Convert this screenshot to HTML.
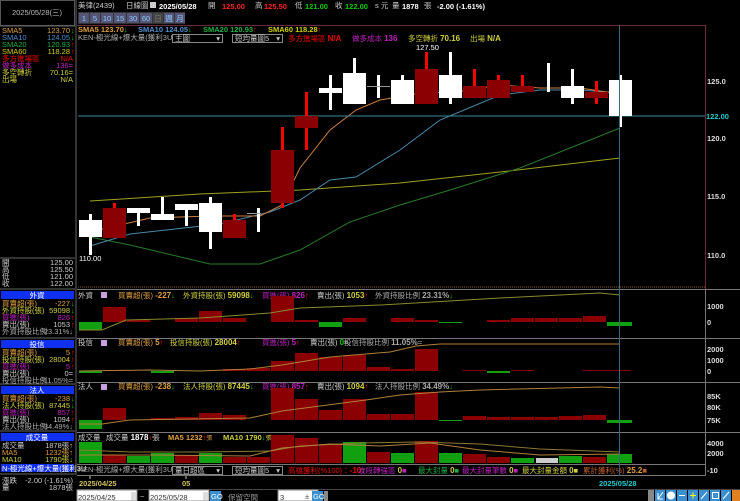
<!DOCTYPE html>
<html><head><meta charset="utf-8"><style>
html,body{margin:0;padding:0;background:#000;width:740px;height:501px;overflow:hidden}
svg{display:block}
text{font-family:"Liberation Sans","Noto Sans CJK TC",sans-serif;font-size:7.5px}
.b{font-weight:bold}
</style></head><body>
<svg width="740" height="501" viewBox="0 0 740 501" xmlns="http://www.w3.org/2000/svg">
<rect width="740" height="501" fill="#000"/>
<rect x="0.5" y="0.5" width="74" height="25" fill="#000" stroke="#555"/>
<text x="37" y="15" fill="#bbb" text-anchor="middle" font-size="7">2025/05/28(三)</text>
<line x1="76" y1="0" x2="76" y2="475" stroke="#666"/>
<line x1="0" y1="26" x2="75" y2="26" stroke="#666"/>
<g font-size="7">
<text x="2" y="33" fill="#e0a040">SMA5</text><text x="70" y="33" fill="#e0a040" text-anchor="end">123.70</text><text x="71" y="33" fill="#0c0">↓</text>
<text x="2" y="40" fill="#5090d0">SMA10</text><text x="70" y="40" fill="#5090d0" text-anchor="end">124.05</text><text x="71" y="40" fill="#0c0">↓</text>
<text x="2" y="47" fill="#20b040">SMA20</text><text x="70" y="47" fill="#20b040" text-anchor="end">120.93</text><text x="71" y="47" fill="#f00">↑</text>
<text x="2" y="54" fill="#d0d000">SMA60</text><text x="70" y="54" fill="#d0d000" text-anchor="end">118.28</text><text x="71" y="54" fill="#f00">↑</text>
<text x="2" y="61" fill="#e00">多方進場區</text><text x="73" y="61" fill="#e00" text-anchor="end">N/A</text>
<text x="2" y="68" fill="#c020c0">做多成本</text><text x="73" y="68" fill="#c020c0" text-anchor="end">136=</text>
<text x="2" y="75" fill="#d0d040">多空轉折</text><text x="73" y="75" fill="#d0d040" text-anchor="end">70.16=</text>
<text x="2" y="82" fill="#d0d040">出場</text><text x="73" y="82" fill="#d0d040" text-anchor="end">N/A</text>
<line x1="0" y1="258" x2="75" y2="258" stroke="#666"/>
<text x="2" y="265" fill="#ccc">開</text><text x="73" y="265" fill="#ccc" text-anchor="end">125.00</text>
<text x="2" y="272" fill="#ccc">高</text><text x="73" y="272" fill="#ccc" text-anchor="end">125.50</text>
<text x="2" y="279" fill="#ccc">低</text><text x="73" y="279" fill="#ccc" text-anchor="end">121.00</text>
<text x="2" y="286" fill="#ccc">收</text><text x="73" y="286" fill="#ccc" text-anchor="end">122.00</text>
<line x1="0" y1="289" x2="75" y2="289" stroke="#666"/>
<rect x="1" y="291" width="73" height="8" fill="#1030f0"/><text x="37" y="298" fill="#fff" text-anchor="middle">外資</text>
<text x="2" y="306" fill="#e0a040">買賣超(張)</text><text x="70" y="306" fill="#e0a040" text-anchor="end">-227</text><text x="71" y="306" fill="#0c0">↓</text>
<text x="2" y="313" fill="#d0d040">外資持股(張)</text><text x="70" y="313" fill="#d0d040" text-anchor="end">59098</text><text x="71" y="313" fill="#0c0">↓</text>
<text x="2" y="320" fill="#c020c0">買進(張)</text><text x="70" y="320" fill="#c020c0" text-anchor="end">826</text><text x="71" y="320" fill="#f00">↑</text>
<text x="2" y="327" fill="#ccc">賣出(張)</text><text x="70" y="327" fill="#ccc" text-anchor="end">1053</text><text x="71" y="327" fill="#f00">↑</text>
<text x="2" y="334" fill="#aaa">外資持股比例</text><text x="73" y="334" fill="#aaa" text-anchor="end">23.31%↓</text>
<line x1="0" y1="338" x2="75" y2="338" stroke="#666"/>
<rect x="1" y="340" width="73" height="8" fill="#1030f0"/><text x="37" y="347" fill="#fff" text-anchor="middle">投信</text>
<text x="2" y="355" fill="#e0a040">買賣超(張)</text><text x="70" y="355" fill="#e0a040" text-anchor="end">5</text><text x="71" y="355" fill="#f00">↑</text>
<text x="2" y="362" fill="#d0d040">投信持股(張)</text><text x="70" y="362" fill="#d0d040" text-anchor="end">28004</text><text x="71" y="362" fill="#f00">↑</text>
<text x="2" y="369" fill="#c020c0">買進(張)</text><text x="70" y="369" fill="#c020c0" text-anchor="end">5</text><text x="71" y="369" fill="#f00">↑</text>
<text x="2" y="376" fill="#ccc">賣出(張)</text><text x="73" y="376" fill="#ccc" text-anchor="end">0=</text>
<text x="2" y="383" fill="#aaa">投信持股比例</text><text x="73" y="383" fill="#aaa" text-anchor="end">11.05%=</text>
<line x1="0" y1="384" x2="75" y2="384" stroke="#666"/>
<rect x="1" y="386" width="73" height="8" fill="#1030f0"/><text x="37" y="393" fill="#fff" text-anchor="middle">法人</text>
<text x="2" y="401" fill="#e0a040">買賣超(張)</text><text x="70" y="401" fill="#e0a040" text-anchor="end">-238</text><text x="71" y="401" fill="#0c0">↓</text>
<text x="2" y="408" fill="#d0d040">法人持股(張)</text><text x="70" y="408" fill="#d0d040" text-anchor="end">87445</text><text x="71" y="408" fill="#0c0">↓</text>
<text x="2" y="415" fill="#c020c0">買進(張)</text><text x="70" y="415" fill="#c020c0" text-anchor="end">857</text><text x="71" y="415" fill="#f00">↑</text>
<text x="2" y="422" fill="#ccc">賣出(張)</text><text x="70" y="422" fill="#ccc" text-anchor="end">1094</text><text x="71" y="422" fill="#f00">↑</text>
<text x="2" y="429" fill="#aaa">法人持股比例</text><text x="73" y="429" fill="#aaa" text-anchor="end">34.49%↓</text>
<line x1="0" y1="431" x2="75" y2="431" stroke="#666"/>
<rect x="1" y="433" width="73" height="8" fill="#1030f0"/><text x="37" y="440" fill="#fff" text-anchor="middle">成交量</text>
<text x="2" y="448" fill="#ccc">成交量</text><text x="73" y="448" fill="#ccc" text-anchor="end">1878張↑</text>
<text x="2" y="455" fill="#e0a040">MA5</text><text x="73" y="455" fill="#e0a040" text-anchor="end">1232張↑</text>
<text x="2" y="462" fill="#d0d040">MA10</text><text x="73" y="462" fill="#d0d040" text-anchor="end">1790張↓</text>
<rect x="1" y="464" width="73" height="8" fill="#1030f0"/><text x="2" y="471" fill="#fff" font-size="6.5">N-極光線+爆大量(獲利3U</text>
<line x1="0" y1="474" x2="75" y2="474" stroke="#666"/>
<text x="2" y="483" fill="#ccc">漲跌</text><text x="73" y="483" fill="#ccc" text-anchor="end">-2.00 (-1.61%)</text>
<text x="2" y="490" fill="#ccc">量</text><text x="73" y="490" fill="#ccc" text-anchor="end">1878張</text>
</g>
<text x="78" y="8" fill="#ccc" font-size="7">美律(2439)</text>
<text x="126" y="8" fill="#ccc" font-size="7">日線圖</text>
<rect x="150" y="2" width="6" height="6" fill="#ccc"/>
<text x="159" y="9" fill="#fff" class="b" font-size="9">2025/05/28</text>
<text x="208" y="8" fill="#ccc" font-size="7">開</text><text x="222" y="9" fill="#f22" class="b" font-size="9">125.00</text>
<text x="255" y="8" fill="#ccc" font-size="7">高</text><text x="264" y="9" fill="#f22" class="b" font-size="9">125.50</text>
<text x="295" y="8" fill="#ccc" font-size="7">低</text><text x="305" y="9" fill="#0c0" class="b" font-size="9">121.00</text>
<text x="335" y="8" fill="#ccc" font-size="7">收</text><text x="345" y="9" fill="#0c0" class="b" font-size="9">122.00</text>
<text x="375" y="8" fill="#ccc" font-size="7">s 元</text>
<text x="392" y="8" fill="#ccc" font-size="7">量</text><text x="402" y="9" fill="#fff" class="b" font-size="9">1878</text>
<text x="424" y="8" fill="#ccc" font-size="7">張</text>
<text x="437" y="9" fill="#fff" class="b" font-size="9">-2.00 (-1.61%)</text>
<g font-size="8" text-anchor="middle">
<rect x="78" y="12" width="107" height="12" fill="#333"/>
<rect x="79" y="13" width="10" height="10" fill="#557"/><text x="84" y="21" fill="#8cf">1</text>
<rect x="90" y="13" width="10" height="10" fill="#557"/><text x="95" y="21" fill="#8cf">5</text>
<rect x="101" y="13" width="12" height="10" fill="#557"/><text x="107" y="21" fill="#8cf">10</text>
<rect x="114" y="13" width="12" height="10" fill="#557"/><text x="120" y="21" fill="#8cf">15</text>
<rect x="127" y="13" width="12" height="10" fill="#557"/><text x="133" y="21" fill="#8cf">30</text>
<rect x="140" y="13" width="12" height="10" fill="#557"/><text x="146" y="21" fill="#8cf">60</text>
<rect x="153" y="13" width="10" height="10" fill="#444"/><text x="158" y="21" fill="#777" font-size="6">日</text>
<rect x="164" y="13" width="10" height="10" fill="#557"/><text x="169" y="21" fill="#8cf" font-size="6">週</text>
<rect x="175" y="13" width="10" height="10" fill="#557"/><text x="180" y="21" fill="#8cf" font-size="6">月</text>
</g>
<line x1="77" y1="25.5" x2="705" y2="25.5" stroke="#6a2a3a"/>
<line x1="705.5" y1="25" x2="705.5" y2="289" stroke="#6a2a3a"/>
<text x="78" y="32" fill="#e0a040" class="b" font-size="8">SMA5 123.70<tspan fill="#0c0">↓</tspan></text>
<text x="138" y="32" fill="#5090d0" class="b" font-size="8">SMA10 124.05<tspan fill="#0c0">↓</tspan></text>
<text x="203" y="32" fill="#20b040" class="b" font-size="8">SMA20 120.93<tspan fill="#f00">↑</tspan></text>
<text x="268" y="32" fill="#d0d000" class="b" font-size="8">SMA60 118.28<tspan fill="#f00">↑</tspan></text>
<text x="78" y="40" fill="#aaa" font-size="6">KEN-極光線+爆大量(獲利3UP)</text>
<rect x="172.5" y="34.5" width="50" height="8" fill="#000" stroke="#888"/><text x="175" y="41" fill="#ccc" font-size="6.5">主圖</text><text x="220" y="41" fill="#ccc" font-size="6" text-anchor="end">▾</text>
<rect x="232.5" y="34.5" width="50" height="8" fill="#000" stroke="#888"/><text x="235" y="41" fill="#ccc" font-size="6.5">短均量圖5</text><text x="280" y="41" fill="#ccc" font-size="6" text-anchor="end">▾</text>
<text x="288" y="41" fill="#e00" font-size="6">多方進場區 <tspan class="b" font-size="8">N/A</tspan></text>
<text x="352" y="41" fill="#c020c0" font-size="6">做多成本 <tspan class="b" font-size="8">136</tspan></text>
<text x="408" y="41" fill="#d0d040" font-size="6">多空轉折 <tspan class="b" font-size="8">70.16</tspan></text>
<text x="470" y="41" fill="#d0d040" font-size="6">出場 <tspan class="b" font-size="8">N/A</tspan></text>
<g fill="none" stroke-width="1">
<polyline stroke="#a0a020" points="90,201 200,194 300,190 400,183 500,172 620,158"/>
<polyline stroke="#2a7a2a" points="90,237 130,245 210,264 260,264 300,250 350,222 400,205 450,190 520,168 620,128"/>
<polyline stroke="#4a88a8" points="90,246 130,234 220,224 270,212 300,200 330,180 356,177 400,150 440,120 500,95 540,90 580,90 620,93"/>
<polyline stroke="#d08040" points="90,232 150,218 210,216 260,216 282,205 300,168 330,130 356,110 380,100 426,92 450,93 500,85 540,88 580,88 620,94"/>
</g>
<line x1="78" y1="116" x2="705" y2="116" stroke="#3a8a9a"/>
<g>
<rect x="89" y="214" width="3" height="41" fill="#fff"/><rect x="79" y="220" width="23" height="17" fill="#fff"/>
<rect x="113" y="203" width="3" height="6" fill="#f00"/><rect x="103" y="208" width="23" height="30" fill="#8b0000"/>
<rect x="137" y="208" width="3" height="18" fill="#fff"/><rect x="127" y="208" width="23" height="5" fill="#fff"/>
<rect x="161" y="197" width="3" height="23" fill="#fff"/><rect x="151" y="214" width="23" height="6" fill="#fff"/>
<rect x="185" y="204" width="3" height="22" fill="#fff"/><rect x="175" y="204" width="23" height="6" fill="#fff"/>
<rect x="209" y="197" width="3" height="52" fill="#fff"/><rect x="199" y="203" width="23" height="29" fill="#fff"/>
<rect x="233" y="214" width="3" height="7" fill="#f00"/><rect x="223" y="220" width="23" height="18" fill="#8b0000"/>
<rect x="257" y="208" width="3" height="24" fill="#fff"/><rect x="247" y="213" width="14" height="1" fill="#999"/>
<rect x="281" y="127" width="3" height="81" fill="#f00"/><rect x="271" y="150" width="23" height="53" fill="#8b0000"/>
<rect x="305" y="92" width="3" height="58" fill="#f00"/><rect x="295" y="116" width="23" height="12" fill="#8b0000"/>
<rect x="329" y="75" width="3" height="35" fill="#fff"/><rect x="319" y="88" width="23" height="5" fill="#fff"/>
<rect x="353" y="58" width="3" height="46" fill="#fff"/><rect x="343" y="73" width="23" height="31" fill="#fff"/>
<rect x="377" y="75" width="3" height="23" fill="#fff"/><rect x="367" y="86" width="23" height="1" fill="#999"/>
<rect x="401" y="75" width="3" height="29" fill="#fff"/><rect x="391" y="80" width="23" height="24" fill="#fff"/>
<rect x="425" y="52" width="3" height="18" fill="#f00"/><rect x="415" y="69" width="23" height="35" fill="#8b0000"/>
<rect x="449" y="52" width="3" height="52" fill="#fff"/><rect x="439" y="75" width="23" height="23" fill="#fff"/>
<rect x="473" y="69" width="3" height="18" fill="#f00"/><rect x="463" y="86" width="23" height="12" fill="#8b0000"/>
<rect x="497" y="75" width="3" height="6" fill="#f00"/><rect x="487" y="80" width="23" height="18" fill="#8b0000"/>
<rect x="521" y="75" width="3" height="12" fill="#f00"/><rect x="511" y="86" width="23" height="6" fill="#8b0000"/>
<rect x="547" y="63" width="3" height="29" fill="#fff"/>
<rect x="571" y="69" width="3" height="35" fill="#fff"/><rect x="561" y="86" width="23" height="12" fill="#fff"/>
<rect x="595" y="81" width="3" height="23" fill="#f00"/><rect x="585" y="92" width="23" height="6" fill="#8b0000"/>
<rect x="619" y="75" width="3" height="52" fill="#fff"/><rect x="609" y="80" width="23" height="36" fill="#fff"/>
</g>
<text x="416" y="50" fill="#fff" font-size="7.5">127.50</text>
<text x="79" y="261" fill="#fff" font-size="7.5">110.00</text>
<g fill="#ddd" font-size="7.5" class="b">
<text x="707" y="84">125.0</text><text x="707" y="141">120.0</text><text x="707" y="199">115.0</text><text x="707" y="258">110.0</text>
</g>
<text x="706" y="119" fill="#2cc" class="b" font-size="7.5">122.00</text>
<line x1="78" y1="287" x2="705" y2="287" stroke="#8a5a2a" stroke-dasharray="1,1"/>
<g stroke="#777"><line x1="77" y1="289.5" x2="740" y2="289.5"/><line x1="77" y1="338.5" x2="740" y2="338.5"/><line x1="77" y1="382.5" x2="740" y2="382.5"/><line x1="77" y1="432.5" x2="740" y2="432.5"/><line x1="77" y1="464.5" x2="705" y2="464.5"/><line x1="77" y1="475.5" x2="705" y2="475.5"/></g>
<line x1="705.5" y1="289" x2="705.5" y2="476" stroke="#777"/>
<g font-size="6">
<text x="78" y="298" fill="#ccc">外資</text><rect x="101" y="292" width="6" height="6" fill="#c8a0e0"/>
<text x="118" y="298" fill="#e0a040">買賣超(張) <tspan class="b" font-size="8">-227</tspan><tspan fill="#0c0">↓</tspan></text>
<text x="183" y="298" fill="#d0d040">外資持股(張) <tspan class="b" font-size="8">59098</tspan><tspan fill="#0c0">↓</tspan></text>
<text x="262" y="298" fill="#c020c0">買進(張) <tspan class="b" font-size="8">826</tspan><tspan fill="#f00">↑</tspan></text>
<text x="317" y="298" fill="#ccc">賣出(張) <tspan class="b" font-size="8" fill="#d0d040">1053</tspan><tspan fill="#f00">↑</tspan></text>
<text x="375" y="298" fill="#aaa">外資持股比例 <tspan class="b" font-size="8">23.31%</tspan><tspan fill="#0c0">↓</tspan></text>
</g>
<g fill="#8b0000">
<rect x="103" y="307" width="23" height="15"/><rect x="127" y="320" width="23" height="2"/><rect x="175" y="318" width="23" height="4"/><rect x="199" y="311" width="23" height="11"/><rect x="223" y="318" width="23" height="4"/>
<rect x="271" y="296" width="23" height="26"/><rect x="295" y="320" width="23" height="2"/><rect x="343" y="318" width="23" height="4"/><rect x="391" y="318" width="23" height="4"/><rect x="415" y="320" width="23" height="2"/>
<rect x="487" y="320" width="23" height="2"/><rect x="511" y="318" width="23" height="4"/><rect x="535" y="318" width="23" height="4"/><rect x="559" y="318" width="23" height="4"/><rect x="583" y="316" width="23" height="6"/>
</g>
<g fill="#10a010"><rect x="79" y="322" width="23" height="8"/><rect x="319" y="322" width="23" height="5"/><rect x="439" y="322" width="23" height="1"/><rect x="607" y="322" width="25" height="4"/></g>
<polyline fill="none" stroke="#8a8a30" points="79,330 102,330 126,320 200,318 270,313 300,308 380,305 500,298 600,293 620,295"/>
<g font-size="6">
<text x="78" y="345" fill="#ccc">投信</text><rect x="101" y="340" width="6" height="6" fill="#c8a0e0"/>
<text x="118" y="345" fill="#e0a040">買賣超(張) <tspan class="b" font-size="8">5</tspan><tspan fill="#f00">↑</tspan></text>
<text x="170" y="345" fill="#d0d040">投信持股(張) <tspan class="b" font-size="8">28004</tspan><tspan fill="#f00">↑</tspan></text>
<text x="262" y="345" fill="#c020c0">買進(張) <tspan class="b" font-size="8">5</tspan><tspan fill="#f00">↑</tspan></text>
<text x="310" y="345" fill="#ccc">賣出(張) <tspan class="b" font-size="8" fill="#0c0">0</tspan>=</text>
<text x="344" y="345" fill="#aaa">投信持股比例 <tspan class="b" font-size="8">11.05%</tspan>=</text>
</g>
<g fill="#8b0000">
<rect x="103" y="370" width="23" height="1"/><rect x="223" y="369" width="23" height="2"/><rect x="247" y="368" width="23" height="3"/>
<rect x="271" y="361" width="23" height="10"/><rect x="295" y="353" width="23" height="18"/><rect x="319" y="357" width="23" height="14"/><rect x="343" y="355" width="23" height="16"/><rect x="367" y="367" width="23" height="4"/><rect x="391" y="369" width="23" height="2"/><rect x="415" y="349" width="23" height="22"/>
<rect x="463" y="370" width="23" height="1"/><rect x="511" y="370" width="23" height="1"/><rect x="583" y="370" width="48" height="1"/>
</g>
<g fill="#10a010"><rect x="79" y="371" width="23" height="2"/><rect x="151" y="371" width="23" height="2"/><rect x="487" y="371" width="23" height="2"/></g>
<polyline fill="none" stroke="#b0803a" points="79,371 150,370 200,371 250,369 282,365 330,357 366,354 390,352 416,346 440,344 620,344"/>
<g font-size="6">
<text x="78" y="389" fill="#ccc">法人</text><rect x="101" y="384" width="6" height="6" fill="#c8a0e0"/>
<text x="118" y="389" fill="#e0a040">買賣超(張) <tspan class="b" font-size="8">-238</tspan><tspan fill="#0c0">↓</tspan></text>
<text x="183" y="389" fill="#d0d040">法人持股(張) <tspan class="b" font-size="8">87445</tspan><tspan fill="#0c0">↓</tspan></text>
<text x="262" y="389" fill="#c020c0">買進(張) <tspan class="b" font-size="8">857</tspan><tspan fill="#f00">↑</tspan></text>
<text x="317" y="389" fill="#ccc">賣出(張) <tspan class="b" font-size="8" fill="#d0d040">1094</tspan><tspan fill="#f00">↑</tspan></text>
<text x="375" y="389" fill="#aaa">法人持股比例 <tspan class="b" font-size="8">34.49%</tspan><tspan fill="#0c0">↓</tspan></text>
</g>
<g fill="#8b0000">
<rect x="103" y="408" width="23" height="12"/><rect x="151" y="418" width="23" height="2"/><rect x="175" y="417" width="23" height="3"/><rect x="199" y="413" width="23" height="7"/><rect x="223" y="415" width="23" height="5"/>
<rect x="271" y="388" width="23" height="32"/><rect x="295" y="399" width="23" height="21"/><rect x="319" y="410" width="23" height="10"/><rect x="343" y="399" width="23" height="21"/><rect x="367" y="414" width="23" height="6"/><rect x="391" y="414" width="23" height="6"/><rect x="415" y="392" width="23" height="28"/>
<rect x="463" y="416" width="23" height="4"/><rect x="487" y="417" width="23" height="3"/><rect x="511" y="417" width="23" height="3"/><rect x="535" y="417" width="23" height="3"/><rect x="559" y="416" width="23" height="4"/><rect x="583" y="415" width="23" height="5"/>
</g>
<g fill="#10a010"><rect x="79" y="420" width="23" height="9"/><rect x="439" y="420" width="23" height="1"/><rect x="607" y="420" width="25" height="3"/></g>
<polyline fill="none" stroke="#b0803a" points="79,424 102,424 130,420 250,418 282,411 320,406 366,400 400,395 440,392 480,390 600,387 620,388"/>
<g fill="#ddd" font-size="7.5" class="b">
<text x="707" y="309">1000</text><text x="707" y="325">0</text>
<text x="707" y="352">2000</text><text x="707" y="363">1000</text><text x="707" y="374">0</text>
<text x="707" y="399">85K</text><text x="707" y="410">80K</text><text x="707" y="423">75K</text>
<text x="707" y="446">4000</text><text x="707" y="456">2000</text><text x="707" y="473">-10</text>
</g>
<g font-size="6">
<text x="78" y="440" fill="#ccc">成交量</text>
<text x="106" y="440" fill="#ccc">成交量 <tspan class="b" font-size="8" fill="#fff">1878</tspan><tspan fill="#f00">↑</tspan>張</text>
<text x="168" y="440" fill="#e0a040" class="b" font-size="8">MA5 1232<tspan fill="#f00">↑</tspan><tspan font-size="6" font-weight="normal">張</tspan></text>
<text x="223" y="440" fill="#d0d040" class="b" font-size="8">MA10 1790<tspan fill="#0c0">↓</tspan><tspan font-size="6" font-weight="normal">張</tspan></text>
</g>
<g fill="#10a010"><rect x="79" y="442" width="23" height="21"/><rect x="127" y="456" width="23" height="7"/><rect x="151" y="453" width="23" height="10"/><rect x="199" y="453" width="23" height="10"/><rect x="343" y="442" width="23" height="21"/><rect x="391" y="453" width="23" height="10"/><rect x="439" y="453" width="23" height="10"/><rect x="511" y="458" width="23" height="5"/><rect x="559" y="456" width="23" height="7"/><rect x="607" y="454" width="25" height="9"/></g>
<g fill="#8b0000"><rect x="103" y="455" width="23" height="8"/><rect x="175" y="455" width="23" height="8"/><rect x="223" y="457" width="23" height="6"/><rect x="247" y="457" width="23" height="6"/><rect x="271" y="435" width="23" height="28"/><rect x="295" y="438" width="23" height="25"/><rect x="319" y="444" width="23" height="19"/><rect x="367" y="452" width="23" height="11"/><rect x="415" y="441" width="23" height="22"/><rect x="463" y="454" width="23" height="9"/><rect x="487" y="457" width="23" height="6"/><rect x="583" y="457" width="23" height="6"/></g>
<rect x="536" y="458" width="22" height="5" fill="#ccc"/>
<polyline fill="none" stroke="#8a7a30" points="79,450 130,452 200,452 270,451 300,446 360,443 420,442 480,444 540,449 620,452"/>
<polyline fill="none" stroke="#b0803a" points="79,455 150,455 250,456 282,448 330,444 380,446 430,443 480,450 540,455 620,454"/>
<g font-size="6">
<text x="78" y="472" fill="#aaa">KEN-極光線+爆大量(獲利3UP)</text>
<rect x="172.5" y="466.5" width="50" height="8" fill="#000" stroke="#888"/><text x="175" y="473" fill="#ccc">量日超區</text><text x="220" y="473" fill="#ccc" text-anchor="end">▾</text>
<rect x="232.5" y="466.5" width="50" height="8" fill="#000" stroke="#888"/><text x="235" y="473" fill="#ccc">短均量圖5</text><text x="280" y="473" fill="#ccc" text-anchor="end">▾</text>
<text x="288" y="473" fill="#e00">高檔獲利(%100)：<tspan class="b" font-size="8">-10</tspan><tspan fill="#0c0">↓</tspan></text>
<text x="358" y="473" fill="#c020c0">波段轉強區 <tspan class="b" font-size="8" fill="#d0d040">0</tspan>■</text>
<text x="418" y="473" fill="#20b040">最大封量 <tspan class="b" font-size="8" fill="#d0d040">0</tspan>■</text>
<text x="462" y="473" fill="#c020c0">最大封量筆數 <tspan class="b" font-size="8" fill="#d0d040">0</tspan>■</text>
<text x="522" y="473" fill="#d0d040">最大封量金額 <tspan class="b" font-size="8">0</tspan>■</text>
<text x="583" y="473" fill="#c06030">累計獲利(%) <tspan class="b" font-size="8" fill="#e0a040">25.2</tspan>■</text>
</g>
<line x1="619.5" y1="25" x2="619.5" y2="476" stroke="#3a6a7a"/>
<line x1="90" y1="476" x2="90" y2="479" stroke="#cc8"/><line x1="186" y1="476" x2="186" y2="479" stroke="#cc8"/>
<text x="79" y="486" fill="#d0c060" class="b" font-size="8">2025/04/25</text>
<text x="182" y="486" fill="#d0c060" class="b" font-size="8">05</text>
<text x="599" y="486" fill="#2cc" class="b" font-size="8">2025/05/28</text>
<line x1="77" y1="489.5" x2="740" y2="489.5" stroke="#444"/>
<rect x="77" y="490" width="60" height="11" fill="#fff" stroke="#888"/><text x="78" y="500" fill="#333" font-size="10">2025/04/25</text><rect x="131" y="492" width="5" height="8" fill="#ddd"/>
<text x="140" y="499" fill="#ccc" font-size="9">~</text>
<rect x="149" y="490" width="60" height="11" fill="#fff" stroke="#888"/><text x="150" y="500" fill="#333" font-size="10">2025/05/28</text><rect x="203" y="492" width="5" height="8" fill="#ddd"/>
<rect x="210" y="491" width="11" height="10" fill="#3a8fd0"/><text x="211" y="499" fill="#fff" font-size="6">GO</text>
<text x="228" y="500" fill="#999" font-size="11">保留空間</text>
<rect x="278" y="490" width="40" height="11" fill="#fff" stroke="#888"/><text x="280" y="500" fill="#333" font-size="10">3</text><text x="305" y="499" fill="#444" font-size="8">±</text>
<rect x="312" y="491" width="11" height="10" fill="#3a8fd0"/><text x="313" y="499" fill="#fff" font-size="6">GO</text>
<rect x="324" y="491" width="4" height="10" fill="#888"/>
<rect x="648" y="490" width="6" height="11" fill="#888"/>
<g fill="#3a8fd0"><rect x="655" y="490" width="10" height="11"/><rect x="666" y="490" width="10" height="11"/><rect x="677" y="490" width="10" height="11"/><rect x="688" y="490" width="10" height="11"/><rect x="699" y="490" width="10" height="11"/><rect x="710" y="490" width="10" height="11"/><rect x="721" y="490" width="10" height="11"/></g>
<rect x="732" y="490" width="8" height="11" fill="#e08020"/>
<g stroke="#fff" fill="none" stroke-width="1">
<path d="M658 499 L663 492 M658 493 L658 499 L663 499"/>
<circle cx="671" cy="495.5" r="3.5" fill="#fff"/>
<path d="M679 495.5 H685"/>
<path d="M690 495.5 H696 M693 492.5 V498.5" stroke="#ff0"/>
<path d="M701 499 L707 492"/>
<rect x="712.5" y="492.5" width="6" height="6"/>
<path d="M723 499 L729 492"/>
</g>
</svg>
</body></html>
